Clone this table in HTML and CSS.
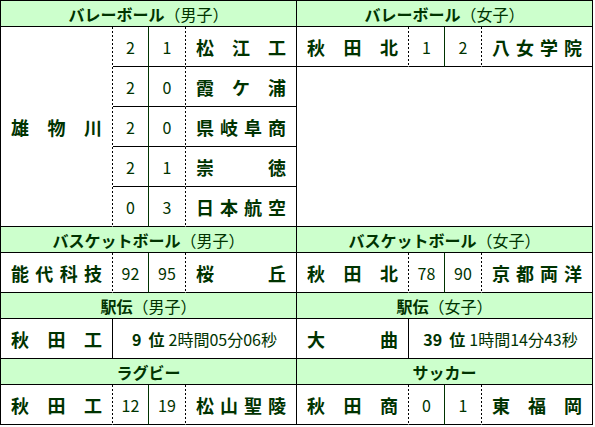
FILE: index.html
```html
<!DOCTYPE html>
<html lang="ja">
<head>
<meta charset="utf-8">
<title>結果</title>
<link rel="stylesheet" href="styles.css">
</head>
<body>
<div class="board">
  <div class="cell hd wide">バレーボール<span class="sub">（男子）</span></div>
  <div class="cell hd wide">バレーボール<span class="sub">（女子）</span></div>

  <div class="cell team dash tall"><span>雄</span><span>物</span><span>川</span></div>
  <div class="cell score green">2</div>
  <div class="cell score dash">1</div>
  <div class="cell team"><span>松</span><span>江</span><span>工</span></div>
  <div class="cell team dash"><span>秋</span><span>田</span><span>北</span></div>
  <div class="cell score green">1</div>
  <div class="cell score dash">2</div>
  <div class="cell team"><span>八</span><span>女</span><span>学</span><span>院</span></div>

  <div class="cell score green">2</div>
  <div class="cell score dash">0</div>
  <div class="cell team"><span>霞</span><span>ケ</span><span>浦</span></div>
  <div class="cell blank"></div>

  <div class="cell score green">2</div>
  <div class="cell score dash">0</div>
  <div class="cell team"><span>県</span><span>岐</span><span>阜</span><span>商</span></div>

  <div class="cell score green">2</div>
  <div class="cell score dash">1</div>
  <div class="cell team"><span>崇</span><span>徳</span></div>

  <div class="cell score green">0</div>
  <div class="cell score dash">3</div>
  <div class="cell team"><span>日</span><span>本</span><span>航</span><span>空</span></div>

  <div class="cell hd wide">バスケットボール<span class="sub">（男子）</span></div>
  <div class="cell hd wide">バスケットボール<span class="sub">（女子）</span></div>

  <div class="cell team dash"><span>能</span><span>代</span><span>科</span><span>技</span></div>
  <div class="cell score green">92</div>
  <div class="cell score dash">95</div>
  <div class="cell team"><span>桜</span><span>丘</span></div>
  <div class="cell team dash"><span>秋</span><span>田</span><span>北</span></div>
  <div class="cell score green">78</div>
  <div class="cell score dash">90</div>
  <div class="cell team"><span>京</span><span>都</span><span>両</span><span>洋</span></div>

  <div class="cell hd wide">駅伝<span class="sub">（男子）</span></div>
  <div class="cell hd wide">駅伝<span class="sub">（女子）</span></div>

  <div class="cell team"><span>秋</span><span>田</span><span>工</span></div>
  <div class="cell result"><span class="rank"><span class="num">9</span>位</span> 2時間05分06秒</div>
  <div class="cell team"><span>大</span><span>曲</span></div>
  <div class="cell result"><span class="rank"><span class="num">39</span>位</span> 1時間14分43秒</div>

  <div class="cell hd wide">ラグビー</div>
  <div class="cell hd wide">サッカー</div>

  <div class="cell team dash"><span>秋</span><span>田</span><span>工</span></div>
  <div class="cell score green">12</div>
  <div class="cell score dash">19</div>
  <div class="cell team"><span>松</span><span>山</span><span>聖</span><span>陵</span></div>
  <div class="cell team dash"><span>秋</span><span>田</span><span>商</span></div>
  <div class="cell score green">0</div>
  <div class="cell score dash">1</div>
  <div class="cell team"><span>東</span><span>福</span><span>岡</span></div>
</div>
</body>
</html>
```

FILE: styles.css
```css
html, body {
  margin: 0;
  padding: 0;
  background: #ffffff;
}

body {
  font-family: "Noto Sans CJK JP", "Noto Sans", sans-serif;
  color: #003300;
}

.board {
  display: grid;
  grid-template-columns: 112px 36px 37px 111px 112px 36px 37px 111px;
  grid-template-rows: 26px repeat(5, 40px) 26px 40px 26px 40px 26px 40px;
  width: max-content;
  border-left: 1px solid #000;
  border-top: 1px solid #000;
}

.cell {
  box-sizing: border-box;
  display: flex;
  align-items: center;
  border-right: 1px solid #000;
  border-bottom: 1px solid #000;
  line-height: 1;
  white-space: nowrap;
}

.wide {
  grid-column: span 4;
}

.tall {
  grid-row: span 5;
}

.blank {
  grid-column: span 4;
  grid-row: span 4;
}

.hd {
  justify-content: center;
  background: #ccffcc;
  font-size: 16px;
  font-weight: bold;
}

.sub {
  font-weight: normal;
}

.team {
  justify-content: space-between;
  padding: 0 10px 0 10px;
  font-size: 18px;
  font-weight: bold;
}

.score {
  justify-content: center;
  font-size: 16px;
}

.green {
  border-right-color: #003300;
}

.dash {
  border-right-color: transparent;
  background-image: repeating-linear-gradient(to bottom, #000 0 2px, transparent 2px 4px);
  background-size: 1px 100%;
  background-position: right top;
  background-repeat: no-repeat;
  background-origin: border-box;
}

.result {
  grid-column: span 3;
  justify-content: center;
  font-size: 16px;
}

.rank {
  font-weight: bold;
  margin-right: 4px;
}

.num {
  margin-right: 7px;
}
```
